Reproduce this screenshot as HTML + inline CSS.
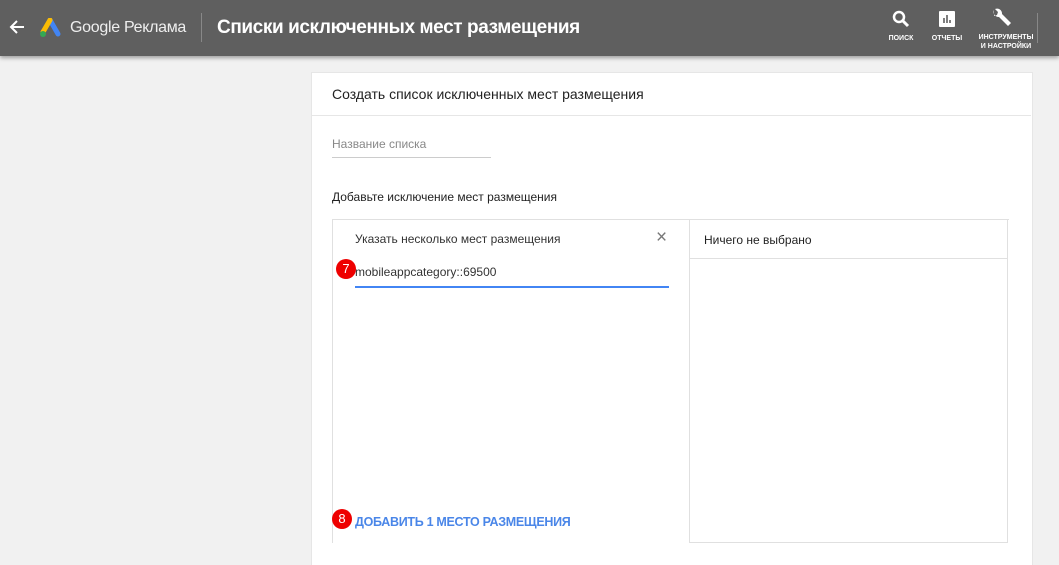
<!DOCTYPE html>
<html style="height:565px;overflow:hidden"><head><meta charset="utf-8"><style>
body{margin:0;width:1059px;height:565px;background:#f1f1f1;font-family:"Liberation Sans",Arial,sans-serif;position:relative;overflow:hidden}
.a{position:absolute}
.hdr{left:0;top:0;width:1059px;height:56px;background:#5f5f5f;box-shadow:0 2px 4px rgba(0,0,0,.35)}
.card{left:311px;top:72px;width:720px;height:500px;background:#fff;border:1px solid #e6e6e6}
.ic{color:#fff;font-size:7px;font-weight:bold;text-align:center}
.badge{width:20px;height:20px;border-radius:50%;background:#e00;color:#fff;font-size:13px;text-align:center;line-height:20px}
</style></head><body>
<div class="a hdr">
<svg class="a" style="left:8px;top:18px" width="18" height="18" viewBox="0 0 18 18"><path d="M16 9H3M9 3L3 9l6 6" stroke="#fff" stroke-width="2" fill="none"/></svg>
<svg class="a" style="left:39px;top:18px" width="22" height="20" viewBox="0 0 22 20"><path d="M11 2L19 16" stroke="#4285f4" stroke-width="5" stroke-linecap="round"/><path d="M11 2L4 14" stroke="#fbbc04" stroke-width="5" stroke-linecap="round"/><circle cx="4" cy="16" r="3" fill="#34a853"/></svg>
<div class="a" style="left:70px;top:19px;font-size:16px;color:#eee;letter-spacing:-0.3px">Google Реклама</div>
<div class="a" style="left:201px;top:13px;width:1px;height:29px;background:#888"></div>
<div class="a" style="left:217px;top:17px;font-size:19px;font-weight:bold;color:#fff;letter-spacing:-0.4px">Списки исключенных мест размещения</div>
<svg class="a" style="left:892px;top:10px" width="18" height="18" viewBox="0 0 18 18"><circle cx="7" cy="7" r="5" stroke="#fff" stroke-width="2.5" fill="none"/><path d="M11 11l5 5" stroke="#fff" stroke-width="3"/></svg>
<div class="a ic" style="left:884px;top:35px;width:34px">ПОИСК</div>
<svg class="a" style="left:938px;top:10px" width="18" height="18" viewBox="0 0 18 18"><rect x="1" y="1" width="16" height="16" rx="1" fill="#fff"/><path d="M6 13V8M9 13V5M12 13v-3" stroke="#5f5f5f" stroke-width="1.6"/></svg>
<div class="a ic" style="left:928px;top:35px;width:38px">ОТЧЕТЫ</div>
<svg class="a" style="left:989px;top:7px" width="24" height="22" viewBox="0 0 24 22"><path d="M5 3a5 5 0 0 0 5 7l9 9 3-3-9-9A5 5 0 0 0 6 2l3 3-1 3-3 1z" fill="#fff"/></svg>
<div class="a ic" style="left:974px;top:33px;width:64px;line-height:9px">ИНСТРУМЕНТЫ<br>И НАСТРОЙКИ</div>
<div class="a" style="left:1037px;top:13px;width:1px;height:30px;background:#888"></div>
</div>
<div class="a card"></div>
<div class="a" style="left:332px;top:86px;font-size:14px;color:#222">Создать список исключенных мест размещения</div>
<div class="a" style="left:312px;top:115px;width:719px;height:1px;background:#e6e6e6"></div>
<div class="a" style="left:332px;top:137px;font-size:12px;color:#888">Название списка</div>
<div class="a" style="left:332px;top:157px;width:159px;height:1px;background:#ccc"></div>
<div class="a" style="left:332px;top:190px;font-size:12px;color:#222">Добавьте исключение мест размещения</div>
<div class="a" style="left:332px;top:219px;width:676px;height:323px;border:1px solid #e0e0e0;border-bottom:none;border-right:none"></div>
<div class="a" style="left:689px;top:219px;width:319px;height:324px;border:1px solid #e0e0e0;box-sizing:border-box"></div>
<div class="a" style="left:689px;top:258px;width:319px;height:1px;background:#e0e0e0"></div>
<div class="a" style="left:704px;top:233px;font-size:12px;color:#222">Ничего не выбрано</div>
<div class="a" style="left:355px;top:232px;font-size:12px;color:#333">Указать несколько мест размещения</div>
<div class="a" style="left:656px;top:227px;font-size:19px;color:#777">×</div>
<div class="a" style="left:355px;top:265px;font-size:12px;color:#333">mobileappcategory::69500</div>
<div class="a" style="left:355px;top:286px;width:314px;height:2px;background:#4285f4"></div>
<div class="a badge" style="left:336px;top:259px">7</div>
<div class="a" style="left:355px;top:515px;font-size:12.5px;font-weight:bold;color:#4a86e8;letter-spacing:-0.3px">ДОБАВИТЬ 1 МЕСТО РАЗМЕЩЕНИЯ</div>
<div class="a badge" style="left:332px;top:509px">8</div>
</body></html>
